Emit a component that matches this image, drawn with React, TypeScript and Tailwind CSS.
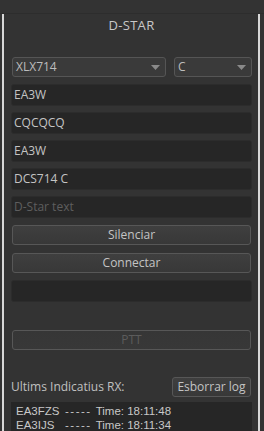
const font = "font-['Segoe_UI','Open_Sans','Noto_Sans',sans-serif]"

const Combo = ({ value, className }: { value: string; className: string }) => (
  <div className={`flex items-center justify-between h-[20px] rounded-[3px] border border-[#555555] bg-[#3a3a3a] pl-[3px] pr-[5px] ${className}`}>
    <span className="text-[12px] leading-none text-[#bdbdbd]">{value}</span>
    <svg width="9" height="5" viewBox="0 0 9 5">
      <polygon points="0,0 9,0 4.5,5" fill="#8a8a8a" />
    </svg>
  </div>
)

const Field = ({ value, placeholder }: { value?: string; placeholder?: string }) => (
  <div className="flex items-center h-[22px] rounded-[3px] bg-[#262626] border border-[#2c2c2c] px-[2px]">
    {value ? (
      <span className="text-[12px] leading-none text-[#c4c4c4]">{value}</span>
    ) : (
      <span className="text-[12px] leading-none text-[#5e5e5e]">{placeholder}</span>
    )}
  </div>
)

const Btn = ({ label, disabled }: { label: string; disabled?: boolean }) => (
  <div
    className={`flex items-center justify-center h-[20px] rounded-[3px] border border-[#575757] bg-gradient-to-b from-[#3f3f3f] to-[#383838] text-[12px] leading-none ${
      disabled ? "text-[#5c5c5c] border-[#4a4a4a] from-[#363636] to-[#343434]" : "text-[#c4c4c4]"
    }`}
  >
    {label}
  </div>
)

const LogRow = ({ call, time }: { call: string; time: string }) => (
  <div className="flex h-[14px] leading-[14px] whitespace-nowrap">
    <span className="w-[49px]">{call}</span>
    <span className="tracking-[1.5px]">-----</span>
    <span className="ml-[4px]">Time: {time}</span>
  </div>
)

export default function App() {
  return (
    <div className={`w-[264px] h-[431px] overflow-hidden bg-[#333333] ${font}`}>
      <div className="h-[14px] border-b border-[#2d2d2d]" />
      <div className="ml-[2px] w-[258px] h-[417px] border-x-2 border-[#d8d8d8] pl-[7px] pr-[6px]">
        <div className="pt-[3px] text-center text-[13px] leading-[16px] text-[#c8c8c8] tracking-[0.3px]">D-STAR</div>

        <div className="mt-[24px] flex gap-[8px]">
          <Combo value="XLX714" className="w-[154px] ml-[1px]" />
          <Combo value="C" className="w-[78px]" />
        </div>

        <div className="mt-[7px] flex flex-col gap-[6px]">
          <Field value="EA3W" />
          <Field value="CQCQCQ" />
          <Field value="EA3W" />
          <Field value="DCS714 C" />
          <Field placeholder="D-Star text" />
        </div>

        <div className="mt-[7px] ml-[1px] mr-[1px] flex flex-col gap-[8px]">
          <Btn label="Silenciar" />
          <Btn label="Connectar" />
        </div>

        <div className="mt-[7px]">
          <Field />
        </div>

        <div className="mt-[28px] mx-[1px]">
          <Btn label="PTT" disabled />
        </div>

        <div className="mt-[27px] flex items-center justify-between">
          <span className="text-[12px] leading-none text-[#c0c0c0]">Ultims Indicatius RX:</span>
          <div className="w-[79px] mr-[1px] h-[20px] flex items-center justify-center rounded-[3px] border border-[#575757] bg-gradient-to-b from-[#3f3f3f] to-[#383838] text-[12px] leading-none text-[#c4c4c4]">
            Esborrar log
          </div>
        </div>

        <div className="mt-[5px] h-[32px] overflow-hidden bg-[#262626] pl-[5px] pt-[2px] font-['Liberation_Sans',sans-serif] text-[11.5px] text-[#c8c8c8]">
          <LogRow call="EA3FZS" time="18:11:48" />
          <LogRow call="EA3IJS" time="18:11:34" />
        </div>
      </div>
    </div>
  )
}
